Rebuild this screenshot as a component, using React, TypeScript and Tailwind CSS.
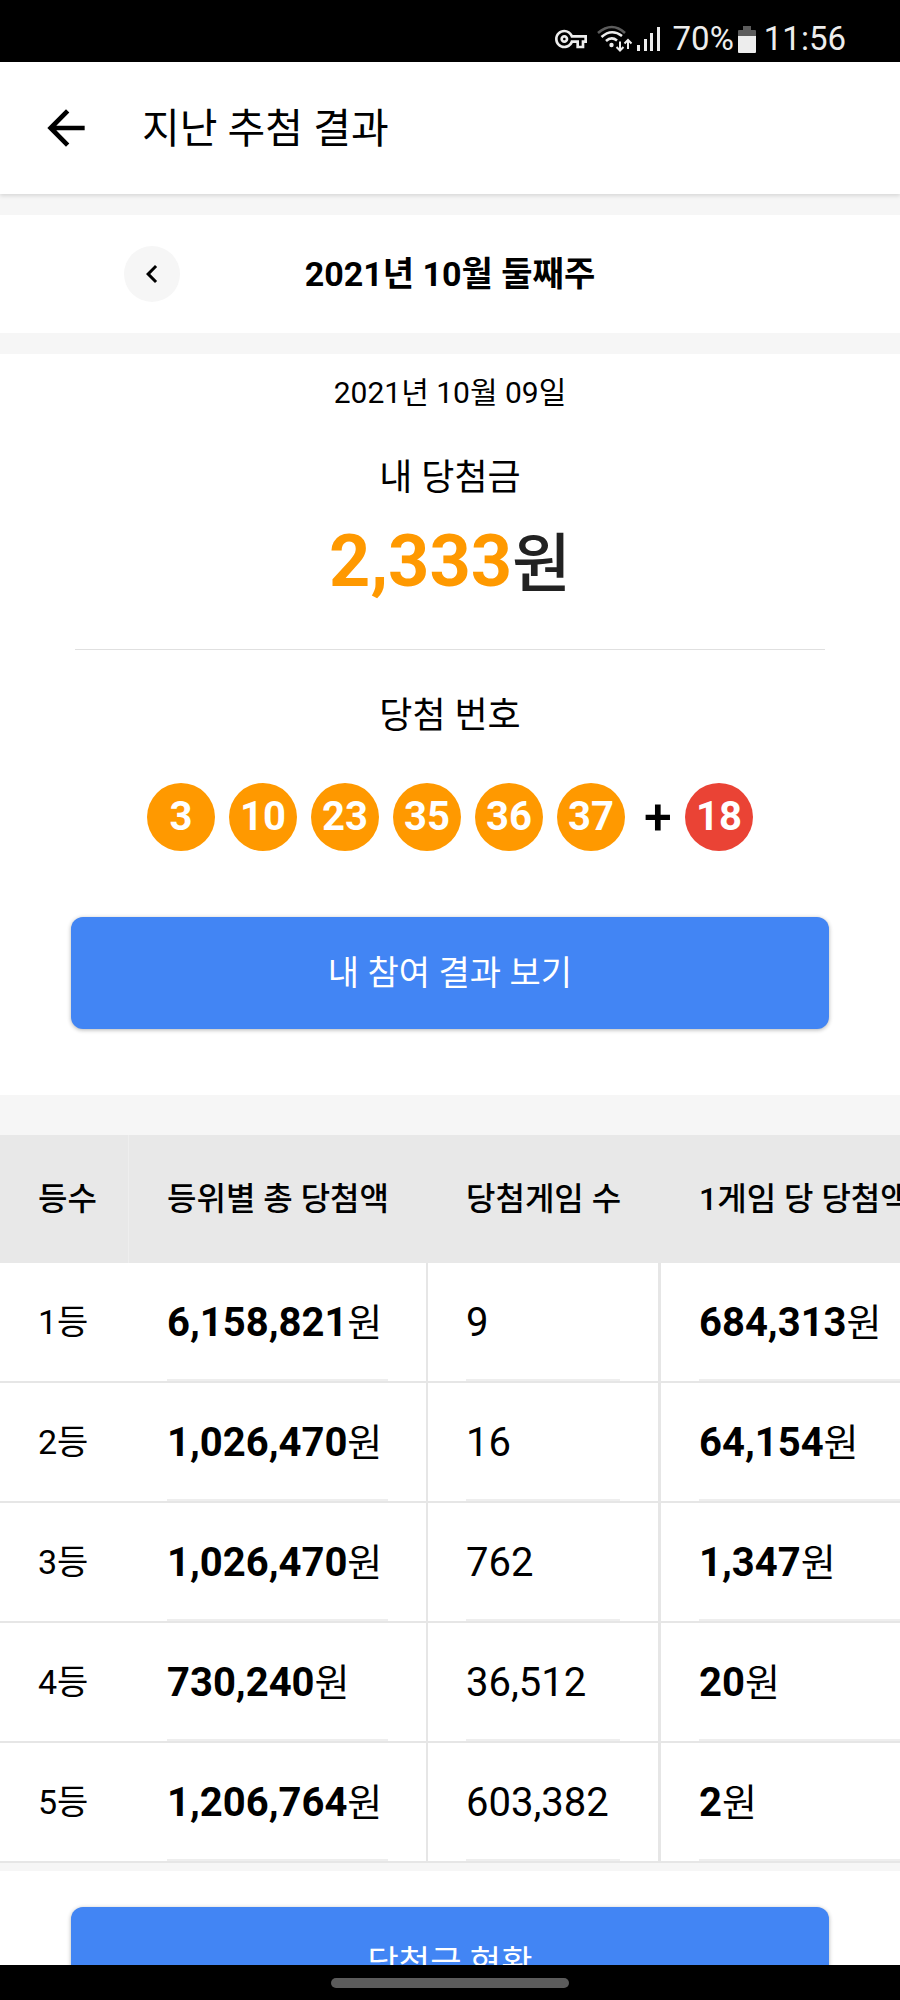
import { MdArrowBack, MdChevronLeft, MdOutlineVpnKey } from 'react-icons/md';

const numbers = [3, 10, 23, 35, 36, 37];
const bonus = 18;

const columns = ['등수', '등위별 총 당첨액', '당첨게임 수', '1게임 당 당첨액'];

const ranks = [
  { rank: '1등', total: '6,158,821', games: '9', each: '684,313' },
  { rank: '2등', total: '1,026,470', games: '16', each: '64,154' },
  { rank: '3등', total: '1,026,470', games: '762', each: '1,347' },
  { rank: '4등', total: '730,240', games: '36,512', each: '20' },
  { rank: '5등', total: '1,206,764', games: '603,382', each: '2' },
];

function WifiIcon() {
  return (
    <svg width="36" height="28" viewBox="0 0 36 28" fill="none" aria-hidden="true">
      <path d="M1 8 Q15 -4 28 8" stroke="#5c5c5c" strokeWidth="2.6" />
      <path d="M4.5 12 Q14.5 3 25 11" stroke="#ededed" strokeWidth="2.6" />
      <path d="M9 16 Q14.5 11 20 15.5" stroke="#ededed" strokeWidth="2.6" />
      <circle cx="14.5" cy="20" r="2.2" fill="#ededed" />
      <path d="M23 16.5V25M19.5 22l3.5 3.5 3.5-3.5" stroke="#ededed" strokeWidth="2" />
      <path d="M31 24v-8.5M27.5 18.5L31 15l3.5 3.5" stroke="#ededed" strokeWidth="2" />
    </svg>
  );
}

function SignalIcon() {
  return (
    <svg width="24" height="26" viewBox="0 0 24 26" fill="#ededed" aria-hidden="true">
      <rect x="0" y="19" width="3" height="6" />
      <rect x="7" y="13" width="3" height="12" />
      <rect x="13" y="7" width="3" height="18" />
      <rect x="20" y="1" width="3" height="24" />
    </svg>
  );
}

function BatteryIcon() {
  return (
    <svg width="18" height="27" viewBox="0 0 18 27" aria-hidden="true">
      <path d="M5 0h8v4h4a1 1 0 0 1 1 1v6H0V5a1 1 0 0 1 1-1h4z" fill="#5c5c5c" />
      <path d="M0 10h18v16a1 1 0 0 1-1 1H1a1 1 0 0 1-1-1z" fill="#ededed" />
    </svg>
  );
}

function StatusBar() {
  return (
    <div className="flex h-[62px] shrink-0 items-end justify-end bg-black pr-[54px] pb-[7px] text-[#ededed]">
      <div className="flex h-8 items-center">
        <MdOutlineVpnKey size={32} />
        <div className="ml-[10px] flex items-center gap-1">
          <WifiIcon />
          <SignalIcon />
        </div>
        <span className="ml-3 text-[33px] leading-8">70%</span>
        <div className="mr-2 ml-1">
          <BatteryIcon />
        </div>
        <span className="text-[33px] leading-8">11:56</span>
      </div>
    </div>
  );
}

function Ball({ value, color }: { value: number; color: string }) {
  return (
    <span
      className={`flex size-[68px] items-center justify-center rounded-full text-[40px] font-bold text-white ${color}`}
    >
      {value}
    </span>
  );
}

function PrimaryButton({ children }: { children: string }) {
  return (
    <button
      type="button"
      className="h-28 w-full rounded-xl bg-[#4285f4] text-[34px] text-white shadow-[0_1px_4px_rgba(0,0,0,0.3)]"
    >
      {children}
    </button>
  );
}

function Won({ amount }: { amount: string }) {
  return (
    <>
      <b className="font-bold">{amount}</b>
      <span className="text-[38px]">원</span>
    </>
  );
}

function PrizeTable() {
  return (
    <div className="overflow-x-auto [scrollbar-width:none]">
      <table className="w-[961px] table-fixed border-separate border-spacing-0 text-left">
        <colgroup>
          <col className="w-[129px]" />
          <col className="w-[299px]" />
          <col className="w-[233px]" />
          <col className="w-[300px]" />
        </colgroup>
        <thead>
          <tr className="h-32 bg-[#e8e8e8] text-[32px] whitespace-nowrap">
            {columns.map((label, i) => (
              <th
                key={label}
                scope="col"
                className={`p-0 pl-[38px] font-medium ${i === 0 ? 'border-r border-[#eeeeee]' : ''}`}
              >
                {label}
              </th>
            ))}
          </tr>
        </thead>
        <tbody className="bg-white text-[40px]">
          {ranks.map((row) => (
            <tr key={row.rank}>
              <th scope="row" className="border-b-2 border-[#e6e6e6] p-0 pl-[38px] text-[34px] font-normal">
                {row.rank}
              </th>
              <td className="border-r-2 border-b-2 border-[#e6e6e6] px-[38px] py-0">
                <div className="flex h-[118px] items-center border-b-2 border-[#eeeeee] pt-1">
                  <Won amount={row.total} />
                </div>
              </td>
              <td className="border-r-3 border-b-2 border-[#e6e6e6] px-[38px] py-0">
                <div className="flex h-[118px] items-center border-b-2 border-[#eeeeee] pt-1">{row.games}</div>
              </td>
              <td className="border-b-2 border-[#e6e6e6] px-[38px] py-0">
                <div className="flex h-[118px] items-center border-b-2 border-[#eeeeee] pt-1">
                  <Won amount={row.each} />
                </div>
              </td>
            </tr>
          ))}
        </tbody>
      </table>
    </div>
  );
}

export default function App() {
  return (
    <div className="flex h-screen flex-col bg-[#f6f6f6] font-[Roboto,'Noto_Sans_CJK_KR',sans-serif] text-black">
      <StatusBar />
      <header className="z-10 flex h-[132px] shrink-0 items-center bg-white px-[38px] shadow-[0_2px_4px_rgba(0,0,0,0.12)]">
        <button type="button" aria-label="뒤로">
          <MdArrowBack size={56} />
        </button>
        <h1 className="ml-12 pt-1 text-[41px]">지난 추첨 결과</h1>
      </header>

      <main className="flex-1 overflow-y-auto [scrollbar-width:none]">
        <section className="mt-[21px] grid h-[118px] grid-cols-[1fr_auto_1fr] items-center bg-white px-[124px]">
          <button
            type="button"
            aria-label="이전 주"
            className="flex size-14 items-center justify-center rounded-full bg-[#f6f6f6]"
          >
            <MdChevronLeft size={36} />
          </button>
          <h2 className="text-[34px] font-bold">2021년 10월 둘째주</h2>
        </section>

        <section className="mt-[21px] bg-white px-[71px] pt-4 pb-[66px] text-center">
          <p className="text-[30px] leading-[46px]">2021년 10월 09일</p>
          <h3 className="mt-9 text-[36px] leading-[52px]">내 당첨금</h3>
          <p className="mt-[14px] text-[72px] leading-[88px] font-bold text-[#ff9900]">
            2,333<span className="text-[64px] font-medium text-[#222222]">원</span>
          </p>
          <hr className="mx-1 mt-10 border-[#e0e0e0]" />
          <h3 className="mt-10 text-[36px] leading-[52px]">당첨 번호</h3>
          <div className="mt-[41px] flex items-center justify-center gap-[14px]">
            {numbers.map((n) => (
              <Ball key={n} value={n} color="bg-[#ff9900]" />
            ))}
            <div className="flex items-center gap-3 pl-1">
              <span className="w-[30px] text-[50px] leading-none font-medium">+</span>
              <Ball value={bonus} color="bg-[#ea4335]" />
            </div>
          </div>
          <div className="mt-[66px]">
            <PrimaryButton>내 참여 결과 보기</PrimaryButton>
          </div>
        </section>

        <section className="mt-10">
          <PrizeTable />
        </section>

        <section className="mt-2 bg-white px-[71px] py-9">
          <PrimaryButton>당첨금 현황</PrimaryButton>
        </section>
      </main>

      <footer className="flex h-[35px] shrink-0 justify-center bg-black pt-[13px]">
        <div className="h-[10px] w-[238px] rounded-full bg-[#5c5c5c]" />
      </footer>
    </div>
  );
}
